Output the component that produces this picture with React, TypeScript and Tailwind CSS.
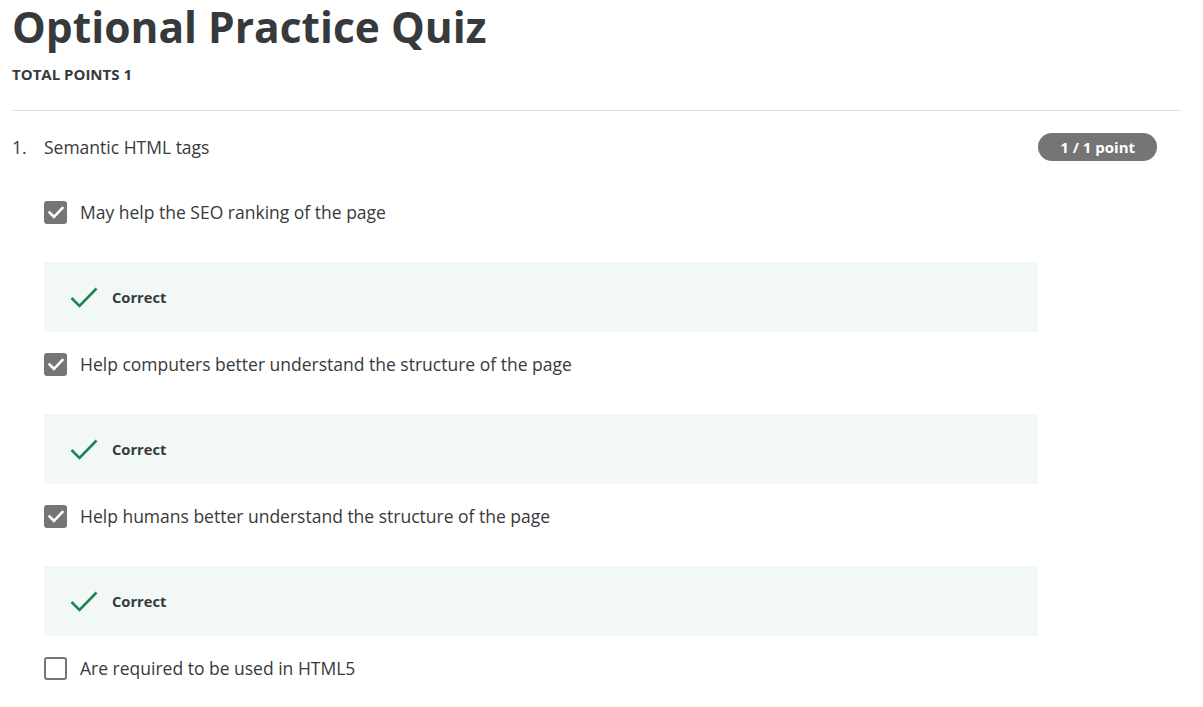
import React from 'react';

const options = [
  { text: 'May help the SEO ranking of the page', checked: true },
  { text: 'Help computers better understand the structure of the page', checked: true },
  { text: 'Help humans better understand the structure of the page', checked: true },
  { text: 'Are required to be used in HTML5', checked: false },
];

function Checkbox({ checked }: { checked: boolean }) {
  if (!checked) {
    return <div className="w-[23px] h-[23px] rounded-[3px] border-2 border-[#757575] bg-white shrink-0" />;
  }
  return (
    <div className="w-[23px] h-[23px] rounded-[3px] bg-[#757575] flex items-center justify-center shrink-0">
      <svg width="16" height="13" viewBox="0 0 16 13" fill="none">
        <path d="M1.5 6.5 L6 11 L14.5 2" stroke="white" strokeWidth="2.6" strokeLinecap="square" />
      </svg>
    </div>
  );
}

function CorrectBox() {
  return (
    <div className="ml-[32px] w-[994px] h-[70px] bg-[#f2f8f5] flex items-center pl-[26px]">
      <svg width="28" height="22" viewBox="0 0 28 22" fill="none">
        <path d="M1.5 12 L9.5 20 L26.5 2.5" stroke="#1f8354" strokeWidth="2.6" />
      </svg>
      <span className="ml-[14px] text-[14.7px] font-bold text-[#373a3c]">Correct</span>
    </div>
  );
}

export default function App() {
  return (
    <div className="bg-white w-[1203px] h-[707px] overflow-hidden px-[12px]" style={{ fontFamily: '"Open Sans", sans-serif' }}>
      <h1 className="text-[42.5px] font-bold text-[#373a3c] leading-[54px]">Optional Practice Quiz</h1>
      <div className="mt-[10px] text-[15px] font-bold text-[#373a3c] leading-[20px]">TOTAL POINTS 1</div>
      <div className="mt-[26px] h-px bg-[#e1e1e1] w-[1169px]" />
      <div className="mt-[22px] flex items-center h-[28px] w-[1145px]">
        <span className="w-[32px] text-[17.5px] text-[#373a3c]">1.</span>
        <span className="text-[17.5px] text-[#373a3c]">Semantic HTML tags</span>
        <span className="ml-auto h-[28px] px-[22px] rounded-full bg-[#757575] text-white text-[15px] font-bold flex items-center">1 / 1 point</span>
      </div>
      <div className="mt-[39px]">
        {options.map((o, i) => (
          <div key={i}>
            <div className="ml-[32px] flex items-center h-[24px] gap-[13px]">
              <Checkbox checked={o.checked} />
              <span className="text-[17.5px] text-[#373a3c]">{o.text}</span>
            </div>
            {o.checked && (
              <div className="mt-[38px] mb-[20px]">
                <CorrectBox />
              </div>
            )}
          </div>
        ))}
      </div>
    </div>
  );
}
